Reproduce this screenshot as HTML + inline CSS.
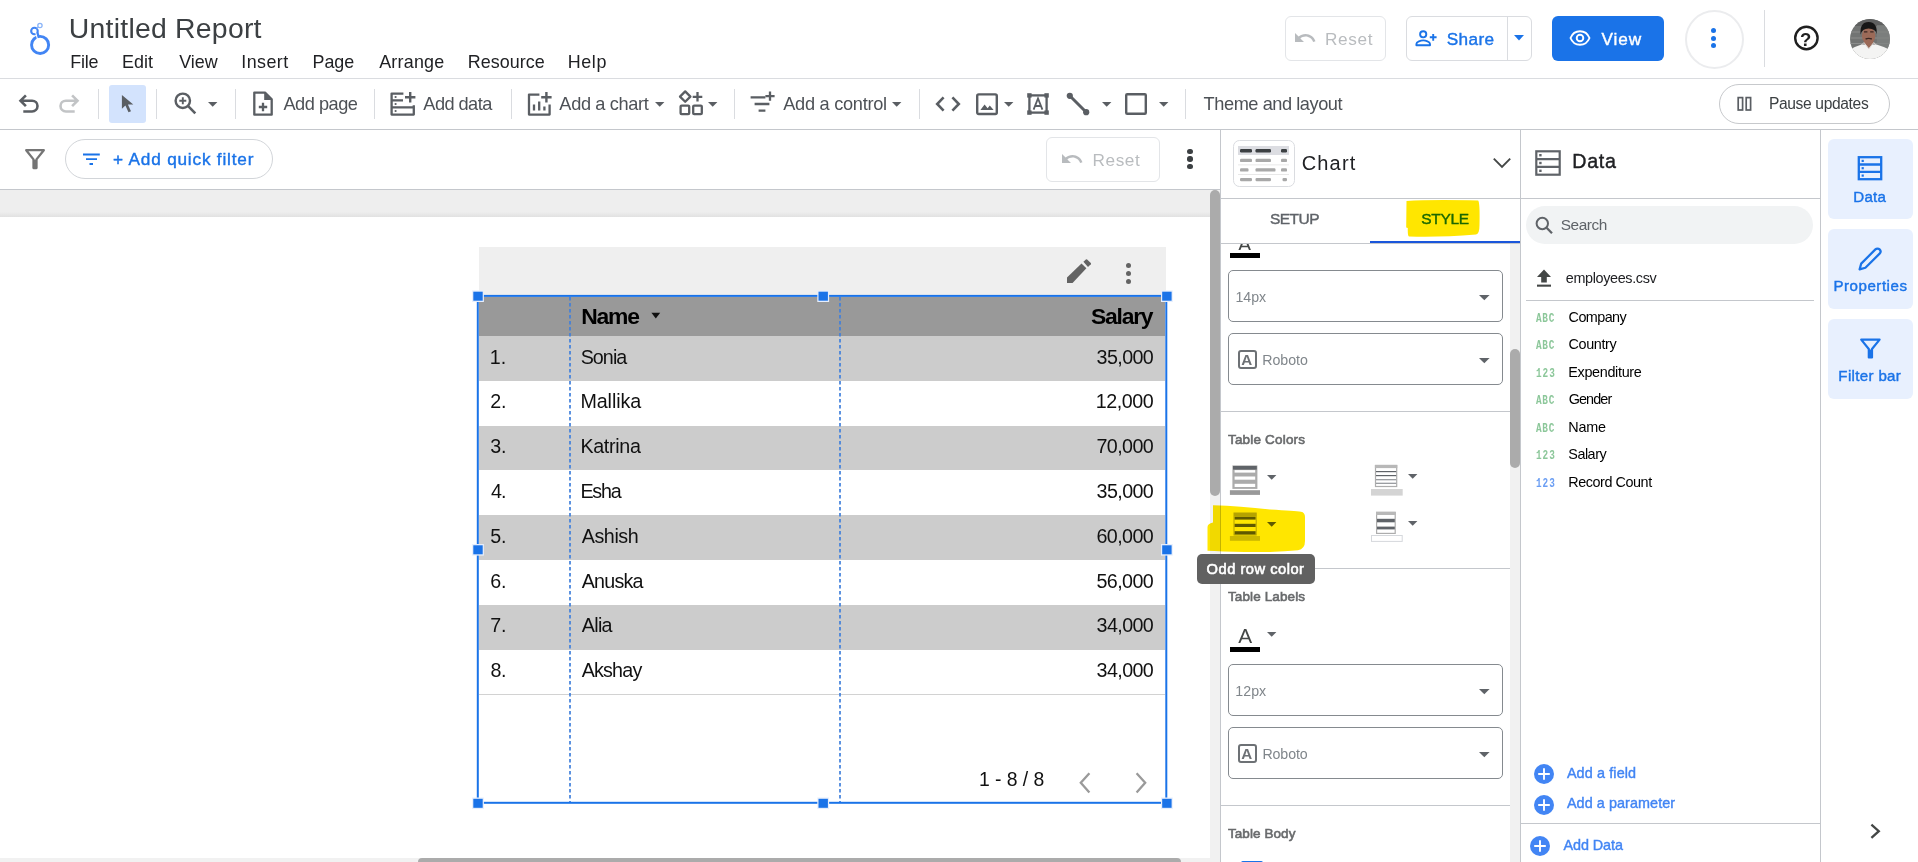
<!DOCTYPE html><html lang="en"><head><meta charset="utf-8"><title>Untitled Report - Looker Studio</title><style>

html,body{margin:0;padding:0;background:#fff;}
body{width:1918px;height:862px;overflow:hidden;position:relative;font-family:"Liberation Sans",sans-serif;}
#app{position:absolute;left:0;top:0;width:1918px;height:862px;overflow:hidden;}
#app div,#app svg,#app span{position:absolute;box-sizing:border-box;}
#app span{white-space:pre;line-height:1;}

</style></head><body><div id="app">
<div style="left:0px;top:78px;width:1918px;height:1px;background:#dadce0;"></div>
<svg style="left:26px;top:18px;" width="30" height="42" viewBox="0 0 30 42">
<circle cx="8.450" cy="13" r="3.300" fill="none" stroke="#4285f4" stroke-width="2.100"/>
<circle cx="13.950" cy="7.500" r="2.150" fill="none" stroke="#8ab4f8" stroke-width="1.300"/>
<path d="M12.300 9 L10.800 10.500" stroke="#8ab4f8" stroke-width="1.300" fill="none"/>
<circle cx="14.100" cy="26.900" r="8.550" fill="none" stroke="#4285f4" stroke-width="2.900"/>
<path d="M11.300 14.600 L12.600 18.800" stroke="#4285f4" stroke-width="2.400" fill="none"/>
<path d="M9 12.200 L11.500 21.300" stroke="#fff" stroke-width="1.100" fill="none"/>
</svg>
<div style="left:1285px;top:16px;width:101px;height:45px;background:#fff;border:1px solid #e3e5e8;border-radius:6px;"></div>
<svg style="left:1293px;top:26px;" width="24" height="24" viewBox="0 0 24 24"><path d="M12.5 8c-2.65 0-5.05.99-6.9 2.6L2 7v9h9l-3.62-3.62c1.39-1.16 3.16-1.88 5.12-1.88 3.54 0 6.55 2.31 7.6 5.5l2.37-.78C21.08 11.03 17.15 8 12.5 8z" fill="#b8bbbe"/></svg>
<div style="left:1406px;top:16px;width:126px;height:45px;background:#fff;border:1px solid #dadce0;border-radius:6px;"></div>
<div style="left:1507px;top:17px;width:1px;height:43px;background:#dadce0;"></div>
<svg style="left:1414px;top:26px;" width="24" height="24" viewBox="0 0 24 24"><circle cx="9.2" cy="8.3" r="3.1" fill="none" stroke="#1a73e8" stroke-width="1.9"/>
<path d="M2.4 19.2v-1.3c0-2.3 4.5-3.5 6.8-3.5s6.8 1.2 6.8 3.5v1.3z" fill="none" stroke="#1a73e8" stroke-width="1.9" stroke-linejoin="round"/>
<path d="M19.200 7.900v6.800M15.800 11.300h6.800" stroke="#1a73e8" stroke-width="1.900" fill="none"/></svg>
<svg style="left:1514px;top:35px;" width="10" height="6" viewBox="0 0 10 6"><path d="M0 0h10l-5 5.4z" fill="#1a73e8"/></svg>
<div style="left:1552px;top:16px;width:112px;height:45px;background:#1a73e8;border-radius:6px;"></div>
<svg style="left:1569px;top:27px;" width="22" height="22" viewBox="0 0 22 22"><path d="M1.5 11C3.2 6.8 7 4.2 11 4.2s7.800 2.600 9.500 6.800C18.800 15.200 15 17.800 11 17.800S3.200 15.200 1.500 11z" fill="none" stroke="#fff" stroke-width="1.9"/>
<circle cx="11" cy="11" r="3.300" fill="none" stroke="#fff" stroke-width="1.900"/></svg>
<div style="left:1684.5px;top:9.5px;width:59px;height:59px;background:#fff;border:2px solid #ebecee;border-radius:50%;"></div>
<div style="left:1711.4px;top:28.0px;width:5px;height:5px;background:#1a73e8;border-radius:50%;"></div>
<div style="left:1711.4px;top:35.7px;width:5px;height:5px;background:#1a73e8;border-radius:50%;"></div>
<div style="left:1711.4px;top:43.3px;width:5px;height:5px;background:#1a73e8;border-radius:50%;"></div>
<div style="left:1764px;top:10px;width:1px;height:57px;background:#dadce0;"></div>
<svg style="left:1792px;top:24px;" width="29" height="28" viewBox="0 0 29 28"><circle cx="14.400" cy="14" r="11.200" fill="none" stroke="#1f1f1f" stroke-width="2.400"/></svg>
<svg style="left:1850px;top:19px;" width="40" height="40" viewBox="0 0 40 40"><defs><clipPath id="av"><circle cx="20" cy="20" r="20"/></clipPath><filter id="avb" x="-10%" y="-10%" width="120%" height="120%"><feGaussianBlur stdDeviation="0.700"/></filter></defs>
<g clip-path="url(#av)"><rect width="40" height="40" fill="#727473"/>
<g filter="url(#avb)">
<rect x="-2" y="-2" width="44" height="9" fill="#5f6160"/>
<rect x="-2" y="12.500" width="44" height="1" fill="#8b8d8c"/><rect x="-2" y="18.500" width="44" height="1" fill="#8b8d8c"/><rect x="-2" y="24" width="44" height="1" fill="#8b8d8c"/>
<rect x="27" y="6" width="14" height="24" fill="#7f8180" opacity="0.700"/>
<path d="M-3 46 L-1 31 Q5 27.500 11.500 25.500 L26.500 25.500 Q33 27.500 39.500 30.500 L43 46z" fill="#f4f4f3"/>
<path d="M13.500 23 L18.800 29.500 L24 23z" fill="#9a6a58"/>
<path d="M11.500 26 L14 23.500 L18.800 29.800 M26 26 L23.800 23.500 L18.800 29.800" stroke="#d9d2cf" stroke-width="1" fill="none"/>
<ellipse cx="18.600" cy="16.500" rx="6.700" ry="8.600" fill="#9c6b59"/>
<path d="M10.600 15.500 Q9.500 3 18.600 3 Q27.500 3 26.600 15 Q25.500 9.800 18.600 9.600 Q12 9.800 10.600 15.500z" fill="#171514"/>
<path d="M14 12.800 h3.400 M20.200 12.800 h3.400" stroke="#3a2620" stroke-width="1.300" fill="none"/>
<path d="M15.600 20 Q18.600 18.800 21.800 20" stroke="#3b2721" stroke-width="1.400" fill="none"/>
</g></g></svg>
<div style="left:0px;top:129px;width:1918px;height:1px;background:#c4c7cc;"></div>
<svg style="left:17px;top:91px;" width="24" height="24" viewBox="0 0 24 24"><path d="M8.400 3.800 L3 9.200 L8.400 14.600 M3.600 9.200 H14.600 a5.400 5.400 0 0 1 0 10.800 H5.800" fill="none" stroke="#5a5e63" stroke-width="2.600" transform="translate(0.500,0.500)"/></svg>
<svg style="left:57px;top:91px;" width="24" height="24" viewBox="0 0 24 24"><path d="M15.600 3.800 L21 9.200 L15.600 14.600 M20.400 9.200 H9.400 a5.400 5.400 0 0 0 0 10.800 H18.200" fill="none" stroke="#c2c4c6" stroke-width="2.600" transform="translate(-0.500,0.500)"/></svg>
<div style="left:98px;top:89px;width:1px;height:30px;background:#dadce0;"></div>
<div style="left:109px;top:85px;width:37px;height:38px;background:#d3e3fd;border-radius:3px;"></div>
<svg style="left:118px;top:92px;" width="20" height="24" viewBox="0 0 20 24"><path d="M3.900 3.100 L3.900 16.800 L7.400 13.500 L10.500 20.300 L13 19.200 L9.900 12.400 L15.300 12.400z" fill="#5a5e63"/></svg>
<div style="left:156px;top:89px;width:1px;height:30px;background:#dadce0;"></div>
<svg style="left:172px;top:90px;" width="26" height="26" viewBox="0 0 26 26"><circle cx="10.800" cy="10.800" r="7.200" fill="none" stroke="#5a5e63" stroke-width="2.400"/>
<path d="M16.200 16.200 L23.300 23.300" stroke="#5a5e63" stroke-width="2.600"/>
<path d="M10.800 7.300v7M7.300 10.800h7" stroke="#5a5e63" stroke-width="1.900"/></svg>
<svg style="left:208.2px;top:101.9px;" width="10" height="6" viewBox="0 0 10 6"><path d="M0 0h9.4l-4.7 4.8z" fill="#5a5e63"/></svg>
<div style="left:235px;top:89px;width:1px;height:30px;background:#dadce0;"></div>
<svg style="left:251px;top:90px;" width="24" height="28" viewBox="0 0 24 28"><path d="M3.300 2.600 H14 L20.700 9.300 V24.700 H3.300z" fill="none" stroke="#5a5e63" stroke-width="2.300" stroke-linejoin="round"/>
<path d="M13.200 2.600 V10 H20.700z" fill="#5a5e63"/>
<path d="M12 12.800v8.400M7.800 17h8.400" stroke="#5a5e63" stroke-width="2.300"/></svg>
<div style="left:374px;top:89px;width:1px;height:30px;background:#dadce0;"></div>
<svg style="left:388px;top:89px;" width="30" height="30" viewBox="0 0 30 30"><path d="M15.400 4.600 H3.600 V25.600 H25.800 V16.200 M3.600 11.400 H15 M3.600 18.400 H25.800" fill="none" stroke="#5a5e63" stroke-width="2.300" stroke-linejoin="round"/>
<path d="M22.200 3v10.400M17 8.200h10.400" stroke="#5a5e63" stroke-width="2.400"/>
<circle cx="7.600" cy="8" r="1.100" fill="#5a5e63"/><circle cx="7.600" cy="15" r="1.100" fill="#5a5e63"/><circle cx="7.600" cy="22" r="1.100" fill="#5a5e63"/></svg>
<div style="left:511px;top:89px;width:1px;height:30px;background:#dadce0;"></div>
<svg style="left:525px;top:89px;" width="30" height="30" viewBox="0 0 30 30"><path d="M14.400 5.600 H4 V25.600 H24.600 V15.600" fill="none" stroke="#5a5e63" stroke-width="2.300" stroke-linejoin="round"/>
<path d="M21.400 3v10.400M16.200 8.200h10.400" stroke="#5a5e63" stroke-width="2.400"/>
<path d="M9 21.500v-6M14.200 21.500v-9M19.400 21.500v-4" stroke="#5a5e63" stroke-width="2.300"/></svg>
<svg style="left:655px;top:101.9px;" width="10" height="6" viewBox="0 0 10 6"><path d="M0 0h9.4l-4.7 4.8z" fill="#5a5e63"/></svg>
<svg style="left:677px;top:89.3px;" width="28" height="28" viewBox="0 0 28 28"><path d="M8.200 2.400 L13.400 7.600 L8.200 12.800 L3 7.600z" fill="none" stroke="#5a5e63" stroke-width="2.300" stroke-linejoin="round"/>
<rect x="3.600" y="16.600" width="8.600" height="8.600" rx="1" fill="none" stroke="#5a5e63" stroke-width="2.300"/>
<rect x="16.200" y="16.600" width="8.600" height="8.600" rx="1" fill="none" stroke="#5a5e63" stroke-width="2.300"/>
<path d="M20.500 3v9.600M15.700 7.800h9.600" stroke="#5a5e63" stroke-width="2.300"/></svg>
<svg style="left:707.6px;top:101.9px;" width="10" height="6" viewBox="0 0 10 6"><path d="M0 0h9.4l-4.7 4.8z" fill="#5a5e63"/></svg>
<div style="left:734px;top:89px;width:1px;height:30px;background:#dadce0;"></div>
<svg style="left:748px;top:89px;" width="28" height="28" viewBox="0 0 28 28"><path d="M2.600 8.400 H17.400 M6.600 15 H21.400 M10.600 21.600 H17.400" stroke="#5a5e63" stroke-width="2.400" fill="none"/>
<path d="M22 2.600v9.200M17.400 7.200h9.200" stroke="#5a5e63" stroke-width="2.300"/></svg>
<svg style="left:892.3px;top:101.9px;" width="10" height="6" viewBox="0 0 10 6"><path d="M0 0h9.4l-4.7 4.8z" fill="#5a5e63"/></svg>
<div style="left:919px;top:89px;width:1px;height:30px;background:#dadce0;"></div>
<svg style="left:934px;top:92px;" width="28" height="24" viewBox="0 0 28 24"><path d="M9.600 5.400 L3.200 12 L9.600 18.600 M18.400 5.400 L24.800 12 L18.400 18.600" fill="none" stroke="#5a5e63" stroke-width="2.600"/></svg>
<svg style="left:974px;top:91px;" width="26" height="26" viewBox="0 0 26 26"><rect x="3.200" y="3.400" width="19.600" height="19.600" rx="1.500" fill="none" stroke="#5a5e63" stroke-width="2.400"/>
<path d="M6.400 19 L10.600 13.600 L13.600 17.200 L15.800 14.600 L19.600 19z" fill="#5a5e63"/></svg>
<svg style="left:1004px;top:101.9px;" width="10" height="6" viewBox="0 0 10 6"><path d="M0 0h9.4l-4.7 4.8z" fill="#5a5e63"/></svg>
<svg style="left:1025px;top:91px;" width="26" height="26" viewBox="0 0 26 26"><rect x="4.400" y="4.400" width="17.200" height="17.200" fill="none" stroke="#5a5e63" stroke-width="2.300"/>
<rect x="2.200" y="2.200" width="4.400" height="4.400" fill="#5a5e63"/><rect x="19.400" y="2.200" width="4.400" height="4.400" fill="#5a5e63"/>
<rect x="2.200" y="19.400" width="4.400" height="4.400" fill="#5a5e63"/><rect x="19.400" y="19.400" width="4.400" height="4.400" fill="#5a5e63"/>
<path d="M8.600 18.600 L13 7.400 L17.400 18.600 M10.200 15 H15.800" fill="none" stroke="#5a5e63" stroke-width="1.800"/></svg>
<svg style="left:1065px;top:91px;" width="26" height="26" viewBox="0 0 26 26"><path d="M5 5 L21 21" stroke="#5a5e63" stroke-width="3"/>
<circle cx="4.800" cy="4.800" r="3.100" fill="#5a5e63"/><circle cx="21.200" cy="21.200" r="3.100" fill="#5a5e63"/></svg>
<svg style="left:1101.7px;top:101.9px;" width="10" height="6" viewBox="0 0 10 6"><path d="M0 0h9.4l-4.7 4.8z" fill="#5a5e63"/></svg>
<svg style="left:1123px;top:91px;" width="26" height="26" viewBox="0 0 26 26"><rect x="3.200" y="3.200" width="19.600" height="19.600" rx="1" fill="none" stroke="#5a5e63" stroke-width="2.400"/></svg>
<svg style="left:1158.8px;top:101.9px;" width="10" height="6" viewBox="0 0 10 6"><path d="M0 0h9.4l-4.7 4.8z" fill="#5a5e63"/></svg>
<div style="left:1185px;top:89px;width:1px;height:30px;background:#dadce0;"></div>
<div style="left:1719px;top:84px;width:171px;height:40px;background:#fff;border:1px solid #c7c9cc;border-radius:20px;"></div>
<svg style="left:1736px;top:95px;" width="18" height="18" viewBox="0 0 18 18"><rect x="2.200" y="2.600" width="4.400" height="12.400" fill="none" stroke="#5a5e63" stroke-width="1.700"/><rect x="10.200" y="2.600" width="4.400" height="12.400" fill="none" stroke="#5a5e63" stroke-width="1.700"/></svg>
<div style="left:0px;top:189px;width:1220px;height:1px;background:#c4c7cc;"></div>
<svg style="left:23px;top:147px;" width="24" height="24" viewBox="0 0 24 24"><path d="M3.200 3.200 H20.800 L13.500 12.400 V21 H10.500 V12.400z" fill="none" stroke="#757575" stroke-width="2.300" stroke-linejoin="round"/><path d="M10.500 12.800h3v8.200h-3z" fill="#757575"/></svg>
<div style="left:65px;top:139px;width:208px;height:40px;background:#fff;border:1px solid #d2d5d9;border-radius:20px;"></div>
<svg style="left:82px;top:152px;" width="19" height="14" viewBox="0 0 19 14"><path d="M1 2.500 H17.800 M4 7.200 H15 M7.500 12 H11" stroke="#1a73e8" stroke-width="1.800" fill="none"/></svg>
<div style="left:1046px;top:137px;width:114px;height:45px;background:#fff;border:1px solid #e3e5e8;border-radius:6px;"></div>
<svg style="left:1060px;top:147px;" width="24" height="24" viewBox="0 0 24 24"><path d="M12.5 8c-2.65 0-5.05.99-6.9 2.6L2 7v9h9l-3.62-3.62c1.39-1.16 3.16-1.88 5.12-1.88 3.54 0 6.55 2.31 7.6 5.5l2.37-.78C21.08 11.03 17.15 8 12.5 8z" fill="#b8bbbe"/></svg>
<div style="left:1187.4px;top:148.8px;width:5.4px;height:5.4px;background:#3c4043;border-radius:50%;"></div>
<div style="left:1187.4px;top:156.3px;width:5.4px;height:5.4px;background:#3c4043;border-radius:50%;"></div>
<div style="left:1187.4px;top:163.8px;width:5.4px;height:5.4px;background:#3c4043;border-radius:50%;"></div>
<div style="left:0px;top:190px;width:1210px;height:672px;background:#eeeeee;"></div>
<div style="left:0px;top:212px;width:1210px;height:5px;background:linear-gradient(#eeeeee,#e1e1e1);"></div>
<div style="left:0px;top:217px;width:1210px;height:645px;background:#fff;"></div>
<div style="left:1210px;top:190px;width:10px;height:672px;background:#f1f1f1;"></div>
<div style="left:1210px;top:190px;width:10px;height:306px;background:#ababab;border-radius:5px;"></div>
<div style="left:0px;top:858px;width:1210px;height:4px;background:#f1f1f1;"></div>
<div style="left:418px;top:858px;width:763px;height:8px;background:#ababab;border-radius:5px;"></div>
<div style="left:479px;top:247px;width:687px;height:49px;background:#efefef;"></div>
<svg style="left:1064px;top:257px;" width="30" height="30" viewBox="0 0 30 30"><path d="M3 26 V20.600 L17.500 6.600 L22.400 11.300 L8.600 26z" fill="#636363"/><path d="M19.400 4.800 L21.900 2.400 Q22.500 1.900 23.100 2.400 L26.800 6 Q27.300 6.600 26.800 7.200 L24 9.900z" fill="#636363"/></svg>
<div style="left:1126.3px;top:263.4px;width:5px;height:5px;background:#636363;border-radius:50%;"></div>
<div style="left:1126.3px;top:271.2px;width:5px;height:5px;background:#636363;border-radius:50%;"></div>
<div style="left:1126.3px;top:279.0px;width:5px;height:5px;background:#636363;border-radius:50%;"></div>
<div style="left:479px;top:297px;width:686px;height:39px;background:#999999;"></div>
<div style="left:479px;top:336px;width:686px;height:45px;background:#cccccc;"></div>
<div style="left:479px;top:426px;width:686px;height:44px;background:#cccccc;"></div>
<div style="left:479px;top:515px;width:686px;height:45px;background:#cccccc;"></div>
<div style="left:479px;top:605px;width:686px;height:45px;background:#cccccc;"></div>
<div style="left:479px;top:694px;width:686px;height:1px;background:#d2d2d2;"></div>
<svg style="left:651px;top:312px;" width="10" height="8" viewBox="0 0 10 8"><path d="M0.400 0.800 H9.200 L4.800 6.400z" fill="#111"/></svg>
<svg style="left:1077px;top:770px;" width="16" height="26" viewBox="0 0 16 26"><path d="M12.400 3.200 L3.800 12.800 L12.400 22.400" fill="none" stroke="#9a9a9a" stroke-width="2.300"/></svg>
<svg style="left:1133px;top:770px;" width="16" height="26" viewBox="0 0 16 26"><path d="M3.600 3.200 L12.200 12.800 L3.600 22.400" fill="none" stroke="#9a9a9a" stroke-width="2.300"/></svg>
<svg style="left:569px;top:297px;" width="2" height="506" viewBox="0 0 2 506"><path d="M1 0V506" stroke="#3f7fdb" stroke-width="2" stroke-dasharray="3.500 2.500" fill="none" opacity="0.850"/></svg>
<svg style="left:839px;top:297px;" width="2" height="506" viewBox="0 0 2 506"><path d="M1 0V506" stroke="#3f7fdb" stroke-width="2" stroke-dasharray="3.500 2.500" fill="none" opacity="0.850"/></svg>
<svg style="left:470px;top:288px;" width="710" height="525" viewBox="0 0 710 525"><rect x="7.80" y="7.90" width="688.50" height="506.90" fill="none" stroke="#1a73e8" stroke-width="2"/><rect x="2.10" y="2.40" width="11.800" height="11.600" fill="#e6eefc"/><rect x="3.30" y="3.70" width="9.400" height="9" fill="#1a73e8"/><rect x="2.10" y="256.00" width="11.800" height="11.600" fill="#e6eefc"/><rect x="3.30" y="257.30" width="9.400" height="9" fill="#1a73e8"/><rect x="2.10" y="509.50" width="11.800" height="11.600" fill="#e6eefc"/><rect x="3.30" y="510.80" width="9.400" height="9" fill="#1a73e8"/><rect x="347.30" y="2.40" width="11.800" height="11.600" fill="#e6eefc"/><rect x="348.50" y="3.70" width="9.400" height="9" fill="#1a73e8"/><rect x="347.30" y="509.50" width="11.800" height="11.600" fill="#e6eefc"/><rect x="348.50" y="510.80" width="9.400" height="9" fill="#1a73e8"/><rect x="691.00" y="2.40" width="11.800" height="11.600" fill="#e6eefc"/><rect x="692.20" y="3.70" width="9.400" height="9" fill="#1a73e8"/><rect x="691.00" y="256.00" width="11.800" height="11.600" fill="#e6eefc"/><rect x="692.20" y="257.30" width="9.400" height="9" fill="#1a73e8"/><rect x="691.00" y="509.50" width="11.800" height="11.600" fill="#e6eefc"/><rect x="692.20" y="510.80" width="9.400" height="9" fill="#1a73e8"/></svg>
<div style="left:1220px;top:130px;width:1px;height:732px;background:#c4c7cc;"></div>
<div style="left:1520px;top:130px;width:1px;height:732px;background:#c4c7cc;"></div>
<div style="left:1221px;top:198px;width:299px;height:1px;background:#c4c7cc;"></div>
<div style="left:1221px;top:243px;width:299px;height:1px;background:#c4c7cc;"></div>
<svg style="left:1233px;top:140px;" width="62" height="47" viewBox="0 0 62 47"><rect x="0.500" y="0.500" width="61" height="46" rx="6" fill="#fff" stroke="#dadce0"/><rect x="5" y="6" width="51" height="9" fill="#dcdde2"/><rect x="7" y="9" width="12" height="3.400" rx="1.200" fill="#3c4043"/><rect x="22.5" y="9" width="15.5" height="3.400" rx="1.200" fill="#3c4043"/><rect x="48" y="9" width="6" height="3.400" rx="1.200" fill="#3c4043"/><rect x="7" y="18.7" width="12" height="3.400" rx="1.200" fill="#a8a8a8"/><rect x="22.5" y="18.7" width="15.5" height="3.400" rx="1.200" fill="#a8a8a8"/><rect x="48" y="18.7" width="6" height="3.400" rx="1.200" fill="#a8a8a8"/><rect x="5" y="24.500" width="51" height="0.800" fill="#e3e3e3"/><rect x="7" y="28.2" width="8.5" height="3.400" rx="1.200" fill="#a8a8a8"/><rect x="22.5" y="28.2" width="20" height="3.400" rx="1.200" fill="#a8a8a8"/><rect x="48" y="28.2" width="6" height="3.400" rx="1.200" fill="#a8a8a8"/><rect x="5" y="34.200" width="51" height="0.800" fill="#e3e3e3"/><rect x="7" y="37.9" width="12" height="3.400" rx="1.200" fill="#a8a8a8"/><rect x="22.5" y="37.9" width="15.5" height="3.400" rx="1.200" fill="#a8a8a8"/><rect x="49.5" y="37.9" width="4.5" height="3.400" rx="1.200" fill="#a8a8a8"/></svg>
<svg style="left:1492px;top:156px;" width="20" height="14" viewBox="0 0 20 14"><path d="M1.800 2.600 L10 10.800 L18.200 2.600" fill="none" stroke="#444746" stroke-width="1.900"/></svg>
<div style="left:1370px;top:241px;width:150px;height:2px;background:#1a56db;"></div>
<div style="left:1510px;top:244px;width:10px;height:618px;background:#f1f1f1;"></div>
<div style="left:1510px;top:349px;width:10px;height:119px;background:#ababab;border-radius:5px;"></div>
<div style="left:1228px;top:244px;width:40px;height:6px;background:none;overflow:hidden;"><span style="left:10px;top:-10.500px;font-size:20px;color:#444746;">A</span></div>
<div style="left:1230px;top:253px;width:30px;height:5px;background:#000;"></div>
<div style="left:1228px;top:270.3px;width:275px;height:51.3px;background:#fff;border:1px solid #858a8f;border-radius:5px;"></div>
<svg style="left:1479px;top:295.0px;" width="12" height="6" viewBox="0 0 12 6"><path d="M0 0h10.600l-5.300 5.200z" fill="#5f6368"/></svg>
<div style="left:1228px;top:333.4px;width:275px;height:51.3px;background:#fff;border:1px solid #858a8f;border-radius:5px;"></div>
<div style="left:1238px;top:349.9px;width:18.5px;height:18.8px;background:none;border:2px solid #6d7175;border-radius:3px;"></div>
<svg style="left:1479px;top:358.09999999999997px;" width="12" height="6" viewBox="0 0 12 6"><path d="M0 0h10.600l-5.300 5.200z" fill="#5f6368"/></svg>
<div style="left:1221px;top:411px;width:289px;height:1px;background:#c4c7cc;"></div>
<svg style="left:1229px;top:464px;" width="33" height="32" viewBox="0 0 33 32"><rect x="3.400" y="1.400" width="25" height="23.500" fill="#ababab"/>
<rect x="4" y="2" width="23.800" height="3.600" fill="#5f6368"/>
<rect x="5.600" y="6.100" width="20.600" height="2.500" fill="#fff"/><rect x="5.600" y="12.500" width="20.600" height="3.200" fill="#fff"/><rect x="5.600" y="19.800" width="20.600" height="3.200" fill="#fff"/>
<rect x="0.900" y="26.200" width="30.100" height="4.700" fill="#999999"/></svg>
<svg style="left:1266.7px;top:474.7px;" width="10" height="6" viewBox="0 0 10 6"><path d="M0 0h9.4l-4.7 4.8z" fill="#5f6368"/></svg>
<svg style="left:1370px;top:464px;" width="34" height="33" viewBox="0 0 34 33"><rect x="5.500" y="1.500" width="21.200" height="21" fill="#fff" stroke="#adadad" stroke-width="1.200"/>
<rect x="4.900" y="0.900" width="22.400" height="3.200" fill="#b8b8b8"/>
<rect x="6" y="7" width="20.200" height="1.200" fill="#5f6368"/><rect x="6" y="11" width="20.200" height="1.200" fill="#5f6368"/>
<rect x="6" y="15.100" width="20.200" height="1.200" fill="#8f9397"/><rect x="6" y="18.700" width="20.200" height="1.200" fill="#8f9397"/>
<rect x="1" y="25" width="31.700" height="6.600" fill="#d4d4d4"/></svg>
<svg style="left:1407.6px;top:473.7px;" width="10" height="6" viewBox="0 0 10 6"><path d="M0 0h9.4l-4.7 4.8z" fill="#5f6368"/></svg>
<svg style="left:1229px;top:511px;" width="33" height="32" viewBox="0 0 33 32"><rect x="5" y="2" width="22.200" height="22" fill="#fff" stroke="#b5b5b5" stroke-width="1"/>
<rect x="5" y="2" width="22.200" height="3.200" fill="#b5b5b5"/>
<rect x="5.600" y="5.600" width="21" height="3" fill="#5f6368"/><rect x="5.600" y="12.800" width="21" height="3.200" fill="#5f6368"/><rect x="5.600" y="20.200" width="21" height="3.300" fill="#5f6368"/>
<rect x="0.900" y="25" width="30.100" height="4.800" fill="#cccccc"/></svg>
<svg style="left:1266.7px;top:521.8px;" width="10" height="6" viewBox="0 0 10 6"><path d="M0 0h9.4l-4.7 4.8z" fill="#5f6368"/></svg>
<svg style="left:1370px;top:511px;" width="34" height="33" viewBox="0 0 34 33"><rect x="6.600" y="1.400" width="18.600" height="21" fill="#fff" stroke="#adadad" stroke-width="1.200"/>
<rect x="6" y="0.800" width="19.800" height="3.200" fill="#b8b8b8"/>
<rect x="7" y="7.800" width="17.800" height="3.500" fill="#5f6368"/><rect x="7" y="15.600" width="17.800" height="2.800" fill="#5f6368"/>
<rect x="1.500" y="24.500" width="30.700" height="5.900" fill="#fff" stroke="#d5d8dc" stroke-width="1"/></svg>
<svg style="left:1407.6px;top:520.6px;" width="10" height="6" viewBox="0 0 10 6"><path d="M0 0h9.4l-4.7 4.8z" fill="#5f6368"/></svg>
<div style="left:1221px;top:568px;width:289px;height:1px;background:#c4c7cc;"></div>
<div style="left:1230px;top:647px;width:30px;height:5px;background:#000;"></div>
<svg style="left:1266.5px;top:631.6px;" width="10" height="6" viewBox="0 0 10 6"><path d="M0 0h9.4l-4.7 4.8z" fill="#5f6368"/></svg>
<div style="left:1228px;top:664.4px;width:275px;height:51.3px;background:#fff;border:1px solid #858a8f;border-radius:5px;"></div>
<svg style="left:1479px;top:689.1px;" width="12" height="6" viewBox="0 0 12 6"><path d="M0 0h10.600l-5.300 5.200z" fill="#5f6368"/></svg>
<div style="left:1228px;top:727.3px;width:275px;height:51.3px;background:#fff;border:1px solid #858a8f;border-radius:5px;"></div>
<div style="left:1238px;top:743.8px;width:18.5px;height:18.8px;background:none;border:2px solid #6d7175;border-radius:3px;"></div>
<svg style="left:1479px;top:752.0px;" width="12" height="6" viewBox="0 0 12 6"><path d="M0 0h10.600l-5.300 5.200z" fill="#5f6368"/></svg>
<div style="left:1221px;top:805px;width:289px;height:1px;background:#c4c7cc;"></div>
<div style="left:1240.5px;top:860.6px;width:22px;height:6px;background:#1a73e8;border-radius:2px 2px 0 0;"></div>
<div style="left:1820px;top:130px;width:1px;height:732px;background:#c4c7cc;"></div>
<div style="left:1521px;top:198px;width:299px;height:1px;background:#c4c7cc;"></div>
<svg style="left:1534px;top:149px;" width="28" height="28" viewBox="0 0 28 28"><rect x="2.300" y="2.300" width="23.400" height="23.400" fill="none" stroke="#5f6368" stroke-width="2.200"/>
<path d="M2.300 10.100 H25.700 M2.300 17.900 H25.700" stroke="#5f6368" stroke-width="2.200"/>
<rect x="5.200" y="5" width="2.400" height="2.400" fill="#5f6368"/><rect x="5.200" y="12.800" width="2.400" height="2.400" fill="#5f6368"/><rect x="5.200" y="20.600" width="2.400" height="2.400" fill="#5f6368"/></svg>
<div style="left:1526px;top:206px;width:287px;height:38px;background:#f1f3f4;border-radius:19px;"></div>
<svg style="left:1533px;top:214px;" width="22" height="22" viewBox="0 0 22 22"><circle cx="9.300" cy="9.500" r="5.700" fill="none" stroke="#5f6368" stroke-width="2"/><path d="M13.600 13.800 L19 19.200" stroke="#5f6368" stroke-width="2.300"/></svg>
<svg style="left:1535px;top:268px;" width="18" height="20" viewBox="0 0 18 20"><path d="M9 1.600 L16 9 H11.800 V14.600 H6.200 V9 H2z" fill="#444746"/><rect x="2" y="16.600" width="14" height="2.100" fill="#444746"/></svg>
<div style="left:1526px;top:300px;width:288px;height:1px;background:#c4c7cc;"></div>
<svg style="left:1534px;top:763.8px;" width="20" height="20" viewBox="0 0 20 20"><circle cx="10" cy="10" r="10" fill="#4285f4"/><path d="M10 4.200v11.600M4.200 10h11.600" stroke="#fff" stroke-width="1.900"/></svg>
<svg style="left:1534px;top:795.1px;" width="20" height="20" viewBox="0 0 20 20"><circle cx="10" cy="10" r="10" fill="#4285f4"/><path d="M10 4.200v11.600M4.200 10h11.600" stroke="#fff" stroke-width="1.900"/></svg>
<div style="left:1521px;top:823px;width:299px;height:1px;background:#c4c7cc;"></div>
<svg style="left:1529.8px;top:836px;" width="20" height="20" viewBox="0 0 20 20"><circle cx="10" cy="10" r="10" fill="#4285f4"/><path d="M10 4.200v11.600M4.200 10h11.600" stroke="#fff" stroke-width="1.900"/></svg>
<div style="left:1828px;top:139px;width:85px;height:79.7px;background:#e8f0fe;border-radius:6px;"></div>
<div style="left:1828px;top:229px;width:85px;height:79.7px;background:#e8f0fe;border-radius:6px;"></div>
<div style="left:1828px;top:319.3px;width:85px;height:79.7px;background:#e8f0fe;border-radius:6px;"></div>
<svg style="left:1856px;top:154px;" width="28" height="28" viewBox="0 0 28 28"><rect x="2.800" y="3.200" width="22.400" height="22" fill="none" stroke="#1a73e8" stroke-width="2.300"/>
<path d="M2.800 10.500 H25.200 M2.800 17.900 H25.200" stroke="#1a73e8" stroke-width="2.300"/>
<rect x="5.600" y="5.800" width="2.200" height="2.200" fill="#1a73e8"/><rect x="5.600" y="13.100" width="2.200" height="2.200" fill="#1a73e8"/><rect x="5.600" y="20.500" width="2.200" height="2.200" fill="#1a73e8"/></svg>
<svg style="left:1857px;top:246px;" width="26" height="26" viewBox="0 0 26 26"><path d="M4.200 17.600 L2.600 23.400 L8.400 21.800 L22.600 7.600 a2.900 2.900 0 0 0 -4.200 -4.200z" fill="none" stroke="#1a73e8" stroke-width="2.200" stroke-linejoin="round"/></svg>
<svg style="left:1859px;top:337px;" width="24" height="24" viewBox="0 0 24 24"><path d="M2.200 2.600 H20.600 L13 12 V20.400 H9.800 V12z" fill="none" stroke="#1a73e8" stroke-width="2.200" stroke-linejoin="round"/><path d="M9.800 12.500h3.200v7.900h-3.200z" fill="#1a73e8"/></svg>
<svg style="left:1868px;top:822px;" width="16" height="18" viewBox="0 0 16 18"><path d="M3.400 2.600 L10.800 9.200 L3.400 15.800" fill="none" stroke="#444746" stroke-width="2.300"/></svg>
<span style="left:68.86px;top:14.00px;font-size:28.4px;color:#3c4043;letter-spacing:0.232px;">Untitled Report</span>
<span style="left:70.17px;top:54.40px;font-size:17.9px;color:#202124;letter-spacing:-0.149px;">File</span>
<span style="left:122.01px;top:54.40px;font-size:17.9px;color:#202124;letter-spacing:0.006px;">Edit</span>
<span style="left:179.17px;top:54.40px;font-size:17.9px;color:#202124;letter-spacing:0.015px;">View</span>
<span style="left:241.22px;top:54.40px;font-size:17.9px;color:#202124;letter-spacing:0.447px;">Insert</span>
<span style="left:312.57px;top:54.40px;font-size:17.9px;color:#202124;letter-spacing:-0.069px;">Page</span>
<span style="left:379.16px;top:54.40px;font-size:17.9px;color:#202124;letter-spacing:0.233px;">Arrange</span>
<span style="left:467.73px;top:54.40px;font-size:17.9px;color:#202124;letter-spacing:0.060px;">Resource</span>
<span style="left:567.73px;top:54.40px;font-size:17.9px;color:#202124;letter-spacing:0.605px;">Help</span>
<span style="left:1325.08px;top:31.20px;font-size:17.2px;color:#b9bcbf;letter-spacing:0.614px;">Reset</span>
<span style="left:1446.73px;top:30.80px;font-size:17.2px;color:#1a73e8;-webkit-text-stroke:0.4px currentColor;letter-spacing:0.360px;">Share</span>
<span style="left:1601.54px;top:30.90px;font-size:17.2px;color:#fff;-webkit-text-stroke:0.4px currentColor;letter-spacing:0.918px;">View</span>
<span style="left:1800.11px;top:30.60px;font-size:18.5px;color:#1f1f1f;font-weight:700;">?</span>
<span style="left:283.44px;top:95.00px;font-size:18.2px;color:#4d5156;letter-spacing:-0.476px;">Add page</span>
<span style="left:423.37px;top:95.00px;font-size:18.2px;color:#4d5156;letter-spacing:-0.561px;">Add data</span>
<span style="left:559.37px;top:95.00px;font-size:18.2px;color:#4d5156;letter-spacing:-0.361px;">Add a chart</span>
<span style="left:783.24px;top:95.00px;font-size:18.2px;color:#4d5156;letter-spacing:-0.277px;">Add a control</span>
<span style="left:1203.61px;top:95.00px;font-size:18.2px;color:#4d5156;letter-spacing:-0.440px;">Theme and layout</span>
<span style="left:1768.91px;top:96.30px;font-size:15.6px;color:#3c4043;letter-spacing:-0.352px;">Pause updates</span>
<span style="left:113.10px;top:150.80px;font-size:17.2px;color:#1a73e8;-webkit-text-stroke:0.4px currentColor;letter-spacing:0.804px;">+ Add quick filter</span>
<span style="left:1092.58px;top:151.70px;font-size:17.2px;color:#b9bcbf;letter-spacing:0.554px;">Reset</span>
<span style="left:489.85px;top:347.60px;font-size:19.7px;color:#111;letter-spacing:0.061px;">1.</span>
<span style="left:580.66px;top:347.60px;font-size:19.7px;color:#111;letter-spacing:-0.932px;">Sonia</span>
<span style="left:1096.54px;top:347.60px;font-size:19.7px;color:#111;letter-spacing:-0.585px;">35,000</span>
<span style="left:490.36px;top:392.40px;font-size:19.7px;color:#111;letter-spacing:-0.398px;">2.</span>
<span style="left:580.38px;top:392.40px;font-size:19.7px;color:#111;letter-spacing:-0.060px;">Mallika</span>
<span style="left:1095.76px;top:392.40px;font-size:19.7px;color:#111;letter-spacing:-0.446px;">12,000</span>
<span style="left:490.24px;top:437.20px;font-size:19.7px;color:#111;letter-spacing:-0.288px;">3.</span>
<span style="left:580.38px;top:437.20px;font-size:19.7px;color:#111;letter-spacing:-0.300px;">Katrina</span>
<span style="left:1096.48px;top:437.20px;font-size:19.7px;color:#111;letter-spacing:-0.575px;">70,000</span>
<span style="left:490.92px;top:482.00px;font-size:19.7px;color:#111;letter-spacing:-0.795px;">4.</span>
<span style="left:580.38px;top:482.00px;font-size:19.7px;color:#111;letter-spacing:-1.175px;">Esha</span>
<span style="left:1096.54px;top:482.00px;font-size:19.7px;color:#111;letter-spacing:-0.585px;">35,000</span>
<span style="left:490.27px;top:526.80px;font-size:19.7px;color:#111;letter-spacing:-0.318px;">5.</span>
<span style="left:581.76px;top:526.80px;font-size:19.7px;color:#111;letter-spacing:-0.430px;">Ashish</span>
<span style="left:1096.45px;top:526.80px;font-size:19.7px;color:#111;letter-spacing:-0.569px;">60,000</span>
<span style="left:490.29px;top:571.60px;font-size:19.7px;color:#111;letter-spacing:-0.329px;">6.</span>
<span style="left:581.76px;top:571.60px;font-size:19.7px;color:#111;letter-spacing:-0.785px;">Anuska</span>
<span style="left:1096.44px;top:571.60px;font-size:19.7px;color:#111;letter-spacing:-0.567px;">56,000</span>
<span style="left:490.33px;top:616.40px;font-size:19.7px;color:#111;letter-spacing:-0.364px;">7.</span>
<span style="left:581.76px;top:616.40px;font-size:19.7px;color:#111;letter-spacing:-0.681px;">Alia</span>
<span style="left:1096.54px;top:616.40px;font-size:19.7px;color:#111;letter-spacing:-0.585px;">34,000</span>
<span style="left:490.41px;top:661.20px;font-size:19.7px;color:#111;letter-spacing:-0.437px;">8.</span>
<span style="left:581.76px;top:661.20px;font-size:19.7px;color:#111;letter-spacing:-0.816px;">Akshay</span>
<span style="left:1096.54px;top:661.20px;font-size:19.7px;color:#111;letter-spacing:-0.585px;">34,000</span>
<span style="left:581.21px;top:305.00px;font-size:22.9px;color:#000;font-weight:700;letter-spacing:-1.212px;">Name</span>
<span style="left:1091.02px;top:305.00px;font-size:22.9px;color:#000;font-weight:700;letter-spacing:-1.234px;">Salary</span>
<span style="left:978.99px;top:769.80px;font-size:19.4px;color:#111;letter-spacing:-0.063px;">1 - 8 / 8</span>
<span style="left:1301.75px;top:152.60px;font-size:20px;color:#202124;letter-spacing:1.152px;">Chart</span>
<span style="left:1269.90px;top:211.40px;font-size:15.5px;color:#5f6368;-webkit-text-stroke:0.4px currentColor;letter-spacing:-0.497px;">SETUP</span>
<span style="left:1421.18px;top:211.40px;font-size:15.5px;color:#1a73e8;-webkit-text-stroke:0.4px currentColor;letter-spacing:-0.268px;">STYLE</span>
<span style="left:1235.38px;top:290.00px;font-size:14.2px;color:#80868b;letter-spacing:0.015px;">14px</span>
<span style="left:1241.30px;top:351.80px;font-size:15.2px;color:#6d7175;font-weight:700;">A</span>
<span style="left:1262.26px;top:352.90px;font-size:14.2px;color:#80868b;letter-spacing:-0.022px;">Roboto</span>
<span style="left:1227.98px;top:432.90px;font-size:13.5px;color:#686a6c;-webkit-text-stroke:0.600px currentColor;letter-spacing:0.182px;">Table Colors</span>
<span style="left:1227.98px;top:590.00px;font-size:13.5px;color:#686a6c;-webkit-text-stroke:0.600px currentColor;letter-spacing:0.119px;">Table Labels</span>
<span style="left:1238.36px;top:625.50px;font-size:20.8px;color:#444746;">A</span>
<span style="left:1235.31px;top:684.00px;font-size:14.2px;color:#80868b;letter-spacing:0.028px;">12px</span>
<span style="left:1241.30px;top:745.70px;font-size:15.2px;color:#6d7175;font-weight:700;">A</span>
<span style="left:1262.45px;top:747.00px;font-size:14.2px;color:#80868b;letter-spacing:-0.109px;">Roboto</span>
<span style="left:1227.98px;top:827.10px;font-size:13.5px;color:#686a6c;-webkit-text-stroke:0.600px currentColor;letter-spacing:0.069px;">Table Body</span>
<span style="left:1572.26px;top:152.40px;font-size:19.7px;color:#202124;-webkit-text-stroke:0.4px currentColor;letter-spacing:0.678px;">Data</span>
<span style="left:1560.82px;top:216.80px;font-size:15.4px;color:#5f6368;letter-spacing:-0.457px;">Search</span>
<span style="left:1565.82px;top:271.00px;font-size:14.4px;color:#202124;letter-spacing:-0.355px;">employees.csv</span>
<span style="left:1536.08px;top:312.60px;font-size:12px;color:#8cc79a;font-weight:700;transform:scaleX(0.78);transform-origin:0 0;letter-spacing:0.958px;font-family:'Liberation Mono',monospace;">ABC</span>
<span style="left:1568.62px;top:309.90px;font-size:14.4px;color:#000;letter-spacing:-0.585px;">Company</span>
<span style="left:1536.08px;top:340.10px;font-size:12px;color:#8cc79a;font-weight:700;transform:scaleX(0.78);transform-origin:0 0;letter-spacing:0.958px;font-family:'Liberation Mono',monospace;">ABC</span>
<span style="left:1568.62px;top:337.40px;font-size:14.4px;color:#000;letter-spacing:-0.391px;">Country</span>
<span style="left:1536.32px;top:367.60px;font-size:12px;color:#8cc79a;font-weight:700;transform:scaleX(0.78);transform-origin:0 0;letter-spacing:1.276px;font-family:'Liberation Mono',monospace;">123</span>
<span style="left:1568.27px;top:364.90px;font-size:14.4px;color:#000;letter-spacing:-0.328px;">Expenditure</span>
<span style="left:1536.08px;top:395.10px;font-size:12px;color:#8cc79a;font-weight:700;transform:scaleX(0.78);transform-origin:0 0;letter-spacing:0.958px;font-family:'Liberation Mono',monospace;">ABC</span>
<span style="left:1568.65px;top:392.40px;font-size:14.4px;color:#000;letter-spacing:-0.877px;">Gender</span>
<span style="left:1536.08px;top:422.60px;font-size:12px;color:#8cc79a;font-weight:700;transform:scaleX(0.78);transform-origin:0 0;letter-spacing:0.958px;font-family:'Liberation Mono',monospace;">ABC</span>
<span style="left:1568.27px;top:419.90px;font-size:14.4px;color:#000;letter-spacing:-0.198px;">Name</span>
<span style="left:1536.32px;top:450.10px;font-size:12px;color:#8cc79a;font-weight:700;transform:scaleX(0.78);transform-origin:0 0;letter-spacing:1.276px;font-family:'Liberation Mono',monospace;">123</span>
<span style="left:1568.32px;top:447.40px;font-size:14.4px;color:#000;letter-spacing:-0.496px;">Salary</span>
<span style="left:1536.32px;top:477.60px;font-size:12px;color:#6b9ef3;font-weight:700;transform:scaleX(0.78);transform-origin:0 0;letter-spacing:1.276px;font-family:'Liberation Mono',monospace;">123</span>
<span style="left:1568.27px;top:474.90px;font-size:14.4px;color:#000;letter-spacing:-0.445px;">Record Count</span>
<span style="left:1566.90px;top:765.50px;font-size:14.4px;color:#4285f4;-webkit-text-stroke:0.4px currentColor;letter-spacing:0.120px;">Add a field</span>
<span style="left:1566.90px;top:796.40px;font-size:14.4px;color:#4285f4;-webkit-text-stroke:0.4px currentColor;letter-spacing:0.070px;">Add a parameter</span>
<span style="left:1563.46px;top:837.50px;font-size:14.4px;color:#4285f4;-webkit-text-stroke:0.4px currentColor;letter-spacing:-0.065px;">Add Data</span>
<span style="left:1853.36px;top:188.60px;font-size:15.1px;color:#1a73e8;-webkit-text-stroke:0.4px currentColor;letter-spacing:0.212px;">Data</span>
<span style="left:1833.42px;top:278.30px;font-size:15.1px;color:#1a73e8;-webkit-text-stroke:0.4px currentColor;letter-spacing:0.528px;">Properties</span>
<span style="left:1838.36px;top:368.20px;font-size:15.1px;color:#1a73e8;-webkit-text-stroke:0.4px currentColor;letter-spacing:0.327px;">Filter bar</span>
<svg style="left:1400px;top:195px;mix-blend-mode:multiply;" width="90" height="50" viewBox="0 0 90 50"><path d="M6.500 6 Q30 4.500 78 5.500 Q80 6 79.500 30 Q79.500 39 76 39.500 Q40 42.500 9 41.500 Q7.500 41 7.800 33 L6.200 32.500z" fill="#ffe600"/></svg>
<svg style="left:1200px;top:500px;mix-blend-mode:multiply;" width="115" height="60" viewBox="0 0 115 60"><path d="M13 5.300 Q40 6 70 9.500 Q95 10.800 101 11.800 Q105 12.500 105 17 L105 41 Q105 49 98 50.200 Q75 52.600 45 52 Q20 51.500 7.500 50.800 L7.500 27 Q7.500 23.500 13 22.500z" fill="#ffe600"/></svg>
<div style="left:1197px;top:554px;width:118px;height:30px;background:#616161;border-radius:5px;"></div>
<span style="left:1206.55px;top:561.50px;font-size:14.7px;color:#fff;-webkit-text-stroke:0.600px currentColor;letter-spacing:0.500px;">Odd row color</span>
</div></body></html>
